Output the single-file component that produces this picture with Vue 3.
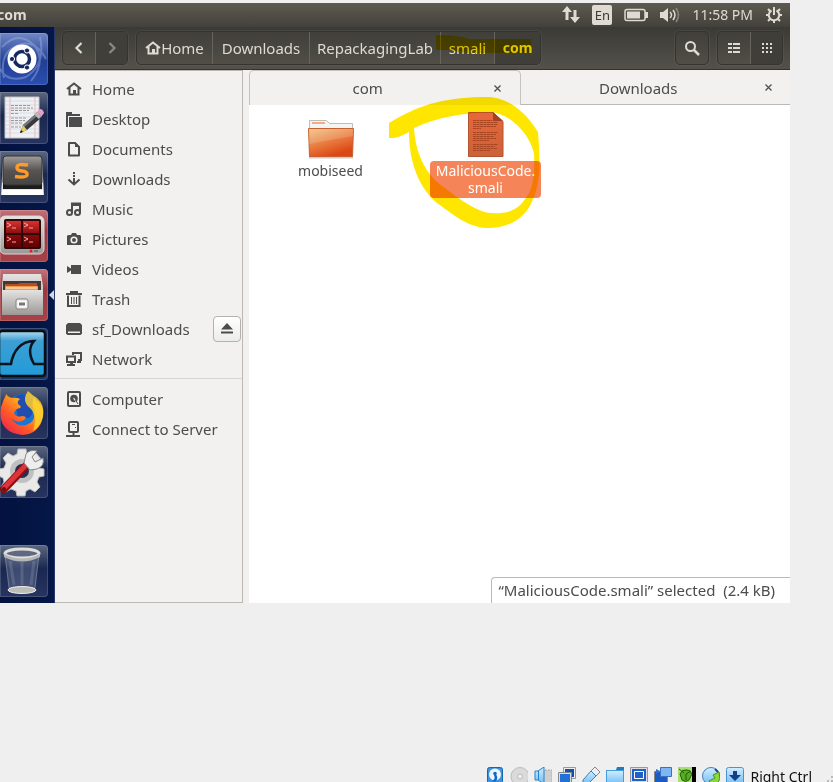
<script setup>
import { ref } from 'vue'

const places = [
  { id: 'home', label: 'Home' },
  { id: 'desktop', label: 'Desktop' },
  { id: 'documents', label: 'Documents' },
  { id: 'downloads', label: 'Downloads' },
  { id: 'music', label: 'Music' },
  { id: 'pictures', label: 'Pictures' },
  { id: 'videos', label: 'Videos' },
  { id: 'trash', label: 'Trash' },
  { id: 'drive', label: 'sf_Downloads', eject: true },
  { id: 'network', label: 'Network' }
]
const devices = [
  { id: 'computer', label: 'Computer' },
  { id: 'server', label: 'Connect to Server' }
]
const launchers = [
  { id: 'dash', label: 'Search your computer', tone: 'blue' },
  { id: 'gedit', label: 'Text Editor', tone: 'slate' },
  { id: 'sublime', label: 'Sublime Text', tone: 'slate' },
  { id: 'terminator', label: 'Terminator', tone: 'red' },
  { id: 'files', label: 'Files', tone: 'red', active: true },
  { id: 'wireshark', label: 'Wireshark', tone: 'navy' },
  { id: 'firefox', label: 'Firefox', tone: 'slate' },
  { id: 'settings', label: 'System Settings', tone: 'slate' },
  { id: 'bin', label: 'Trash', tone: 'slate', last: true }
]
const crumbs = [
  { label: 'Home', size: 'w-home', icon: true },
  { label: 'Downloads', size: 'w-down' },
  { label: 'RepackagingLab', size: 'w-lab' },
  { label: 'smali', size: 'w-smali' },
  { label: 'com', size: 'w-com', current: true }
]
const tabs = ['com', 'Downloads']
const activeTab = ref('com')
const vmIcons = ['disk', 'cd', 'audio', 'net', 'usb', 'shared', 'display', 'record', 'cpu', 'mouse', 'key']
</script>

<template>
  <svg class="defs" aria-hidden="true">
    <defs>
      <linearGradient id="gFolder" x1="0" y1="0" x2="0.5" y2="1">
        <stop offset="0" stop-color="#f0c27e" /><stop offset="0.5" stop-color="#ea8346" /><stop offset="1" stop-color="#dd4512" />
      </linearGradient>
      <linearGradient id="gDoc" x1="0" y1="0" x2="0" y2="1">
        <stop offset="0" stop-color="#e8673b" /><stop offset="1" stop-color="#cc6138" />
      </linearGradient>
      <linearGradient id="gSteel" x1="0" y1="0" x2="0" y2="1">
        <stop offset="0" stop-color="#e4e3e1" /><stop offset="1" stop-color="#9b9896" />
      </linearGradient>
      <linearGradient id="gDark" x1="0" y1="0" x2="0" y2="1">
        <stop offset="0" stop-color="#a19d9c" /><stop offset="0.5" stop-color="#575452" /><stop offset="1" stop-color="#444" />
      </linearGradient>
      <linearGradient id="gShark" x1="0" y1="0" x2="0" y2="1">
        <stop offset="0" stop-color="#b5dcef" /><stop offset="0.22" stop-color="#3d9fd4" /><stop offset="1" stop-color="#219bd8" />
      </linearGradient>
      <linearGradient id="gFox" x1="1" y1="0" x2="0.1" y2="1">
        <stop offset="0" stop-color="#ffef44" /><stop offset="0.35" stop-color="#ffb01f" /><stop offset="0.65" stop-color="#ff5a26" /><stop offset="1" stop-color="#e91e55" />
      </linearGradient>
      <linearGradient id="gTerm" x1="0" y1="0" x2="0" y2="1">
        <stop offset="0" stop-color="#d5342f" /><stop offset="0.5" stop-color="#8d0a0c" /><stop offset="1" stop-color="#5d0205" />
      </linearGradient>
      <linearGradient id="gVb" x1="0" y1="0" x2="0" y2="1">
        <stop offset="0" stop-color="#d3edff" /><stop offset="1" stop-color="#6fbdf2" />
      </linearGradient>

      <symbol id="home" viewBox="0 0 16 16">
        <path d="M1 8 8 2.5 15 8M3.5 6.5v7h9v-7" fill="none" stroke="currentColor" stroke-width="2" />
        <path d="M7 9h3v5H7z" fill="currentColor" />
      </symbol>
      <symbol id="desktop" viewBox="0 0 16 16">
        <path d="M0 1h6v2h8v2H2v11H0zM3 6h13v10H3z" fill="currentColor" />
      </symbol>
      <symbol id="documents" viewBox="0 0 16 16">
        <path d="M3 2h6l4 4v8.500H3z" fill="none" stroke="currentColor" stroke-width="2" stroke-linejoin="round" />
        <path d="M9 1v5h5z" fill="currentColor" />
      </symbol>
      <symbol id="downloads" viewBox="0 0 16 16">
        <path d="M7 1h2v2H7zM7 4h2v2H7zM7 7h2v5H7z" fill="currentColor" />
        <path d="m2.500 8.500 5.500 5 5.500-5" fill="none" stroke="currentColor" stroke-width="2" />
      </symbol>
      <symbol id="music" viewBox="0 0 16 16">
        <path d="M6 12V2.500h8V12M6 4h8" fill="none" stroke="currentColor" stroke-width="2" />
        <circle cx="3.500" cy="11.500" r="2.500" fill="none" stroke="currentColor" stroke-width="2" />
        <circle cx="11.500" cy="11.500" r="2.500" fill="none" stroke="currentColor" stroke-width="2" />
      </symbol>
      <symbol id="pictures" viewBox="0 0 16 16">
        <path d="M2 4h3l1-2h4l1 2h3l1 1v9H1V5z" fill="currentColor" />
        <circle cx="8" cy="9" r="2.800" fill="none" stroke="#f2f1f0" stroke-width="1.600" />
      </symbol>
      <symbol id="videos" viewBox="0 0 16 16">
        <path d="M5 4h10v9H5V9.500L1 12V5l4 2.500z" fill="currentColor" />
      </symbol>
      <symbol id="trash" viewBox="0 0 16 16">
        <path d="M5 2.500V1h6v1.500M0 3h16M2 4.500V15h11.500V4.500" fill="none" stroke="currentColor" stroke-width="2" />
        <path d="M5.500 6v7M8 6v7M10.500 6v7" stroke="currentColor" />
      </symbol>
      <symbol id="drive" viewBox="0 0 16 16">
        <path d="M2 2h12l2 2v8.500L14.500 14h-13L0 12.500V4z" fill="currentColor" />
        <path d="M2 10.500h12V12H2z" fill="#f2f1f0" />
      </symbol>
      <symbol id="network" viewBox="0 0 16 16">
        <path d="M7 4V2h8v7h-3M1 5.500h8V11H1z" fill="none" stroke="currentColor" stroke-width="2" />
        <path d="M4 11h3v2h2v2H1v-2h3zM11 10h4v2h-4z" fill="currentColor" />
      </symbol>
      <symbol id="computer" viewBox="0 0 16 16">
        <rect x="2" y="1" width="12" height="14" rx="1" fill="none" stroke="currentColor" stroke-width="2" />
        <circle cx="8" cy="7.500" r="3.800" fill="currentColor" />
        <path d="m7.500 7 4 5.500" stroke="#f2f1f0" stroke-width="1.200" /><path d="m9.500 9 2.500 4" stroke="currentColor" />
      </symbol>
      <symbol id="server" viewBox="0 0 16 16">
        <rect x="3" y="1" width="9" height="10" rx="1" fill="none" stroke="currentColor" stroke-width="2" />
        <path d="M6 3.500h3M9 6.500h1" stroke="currentColor" /><path d="M7.500 11v3M0 15h14" stroke="currentColor" stroke-width="2" />
      </symbol>

      <symbol id="dash" viewBox="0 0 48 52">
        <path d="M2 14Q18-3 34 12 47 28 31 48M40 4Q46 31 26 44 8 50 0 36M4 45Q-2 17 22 11 36 8 46 26" fill="none" stroke="#a9b9e8" stroke-opacity=".4" stroke-width="2" />
        <circle cx="22" cy="26" r="14.500" fill="#fff" />
        <circle cx="22" cy="26" r="7.500" fill="none" stroke="#16295f" stroke-width="3.500" />
        <g fill="#16295f" stroke="#fff"><circle cx="12" cy="26" r="2.600" /><circle cx="27" cy="17.500" r="2.600" /><circle cx="27" cy="34.500" r="2.600" /></g>
      </symbol>
      <symbol id="gedit" viewBox="0 0 48 52">
        <path d="M5 5h34v41H5z" fill="#eef0f2" stroke="#c7c4bd" />
        <path d="M5 9h34M5 13h34M5 17h34M5 21h34M5 25h34M5 29h34M5 33h34M5 37h34M5 41h34" stroke="#cfd9e6" stroke-width=".7" />
        <path d="M10 5v41M35 5v41" stroke="#e9b8bf" />
        <path d="M11 13.500h20M11 16h22M11 18.500h18M11 21.500h7M11 26h16M11 28.500h14M11 31h12M11 35h10" stroke="#999" stroke-dasharray="3 1" />
        <path d="m20 41 3-8 15-13 4 5-15 13z" fill="#39393b" /><path d="m23 33 15-13 1.500 2-15 13z" fill="#77787b" />
        <path d="m20 41 3-8 4 5z" fill="#e0cd63" /><path d="m20 41 1-3 2 2z" fill="#111" />
        <path d="m34 22 3-2.500 4.500 5-3 2.500z" fill="#bbb" /><path d="m37 19.500 3-2.500q3 0 4 4l-2.500 3.500z" fill="#e8a0c6" />
      </symbol>
      <symbol id="sublime" viewBox="0 0 48 52">
        <path d="M3 8h39l2 36H1z" fill="#e6e5e5" /><path d="M2 39h41v5H2z" fill="#fff" />
        <path d="M3 28h39v10H3z" fill="#1d1c1c" /><rect x="3" y="5" width="39" height="29" rx="3" fill="url(#gDark)" stroke="#343231" />
        <path d="M28 14Q17 12 17 16.500q0 3 5 3.500 6 .500 5 4-1 3-12 1.500" fill="none" stroke="#ff9928" stroke-width="3.500" />
      </symbol>
      <symbol id="terminator" viewBox="0 0 48 52">
        <rect x="0" y="6" width="44" height="38" rx="5" fill="url(#gSteel)" stroke="#d9d7d5" /><rect x="4" y="9" width="37" height="30" rx="2" fill="#2a090a" />
        <path d="M6 11h15v12H6zM23 11h16v12H23zM6 25h15v12H6zM23 25h16v12H23z" fill="url(#gTerm)" />
        <path d="m7 13 4 2-4 2m5 1h4m8-5 4 2-4 2m5 1h4M7 27l4 2-4 2m5 1h4m8-5 4 2-4 2m5 1h4" fill="none" stroke="#f3aaa8" />
        <circle cx="31" cy="41" r="1.500" fill="#f01a1a" /><path d="M34 41h4" stroke="#777" stroke-width="2" />
      </symbol>
      <symbol id="files" viewBox="0 0 48 52">
        <path d="M3 5h38l2 12v27H2V17z" fill="url(#gSteel)" /><path d="M3 12h38v14H3z" fill="#403a38" />
        <path d="M5 15h13l2-1h17v12H5z" fill="#bb4c20" /><path d="M5 17h33v9H5z" fill="#ee9b51" /><path d="M6 19h31" stroke="#fff3d8" />
        <path d="M2 21h41v25H2z" fill="url(#gSteel)" /><rect x="16" y="30" width="12" height="10" rx="2" fill="#efefef" stroke="#838383" />
        <rect x="18.500" y="33" width="7" height="4" fill="#777" stroke="#fff" />
      </symbol>
      <symbol id="wireshark" viewBox="0 0 48 52">
        <rect x="-1" y="3" width="46" height="45" rx="3" fill="url(#gShark)" stroke="#080d12" stroke-width="2.500" />
        <path d="M0 36h11C13 23 21 13 34 13 28 20 30 29 34 36h11" fill="none" stroke="#07141d" stroke-width="2.500" />
      </symbol>
      <symbol id="firefox" viewBox="0 0 48 52">
        <circle cx="23" cy="25" r="18" fill="#1677d5" /><path d="M14 10Q23 4 31 11 38 21 29 31H18z" fill="#1f4eb3" />
        <path d="M4 12q2-3 2-5 3 4 7 4 3-1 7 1-4 3-1 6 3 1 1 3-5 1-6 5 2 5 8 3 5 0 3 3-6 6-14-1 5 9 15 7 11-3 8-16-3-4 0-12 1 3 4 5Q44 20 43 29 40 47 22 48-3 45 1 20z" fill="url(#gFox)" />
        <path d="M28 4q4 4 9 7 8 7 6 18-2 10-10 15 5-15-3-23Q21 14 28 4z" fill="#ffcf2e" fill-opacity=".85" />
      </symbol>
      <symbol id="settings" viewBox="0 0 48 52">
        <path d="m18 3 8 0 1 6 4 2 5-4 5 6-3 5 1 4 5 1v7l-5 1-2 5 3 5-5 5-5-3-4 2-1 5h-8l-1-5-5-2-5 3-5-5 3-5-1-4-4-2v-7l5-1 2-5-3-5 5-5 5 3 4-2z" fill="#e9e9e7" stroke="#b8b8b8" />
        <circle cx="22" cy="25" r="12" fill="#bfc0c2" /><circle cx="22" cy="25" r="7" fill="#243154" />
        <path d="M4 43 26 20" stroke="#8e0d12" stroke-width="8" stroke-linecap="round" /><path d="M4 42 26 19" stroke="#dd343a" stroke-width="5" stroke-linecap="round" />
        <path d="m24 17 2-9q4-5 11-3l-5 6 3 5 8-4q2 8-6 11l-7 1z" fill="#eee" stroke="#888" /><circle cx="4" cy="43" r="2" fill="#631116" />
      </symbol>
      <symbol id="bin" viewBox="0 0 48 52">
        <path d="M5 10 9 43q13 8 26 0L39 10" fill="#c7d2ea" fill-opacity=".2" stroke="#d3dae8" stroke-opacity=".35" />
        <path d="m10 16 4 24M34 16l-3 24M22 17v23" stroke="#fff" stroke-opacity=".13" stroke-width="3" />
        <ellipse cx="22" cy="45" rx="14" ry="3.500" fill="#bcbcb8" stroke="#eee" /><ellipse cx="22" cy="8.500" rx="17" ry="4.500" fill="#606984" stroke="#dededb" stroke-width="3" />
        <path d="M4 9q18 9 36 0v3q-18 9-36 0z" fill="#b4b5b5" />
      </symbol>

      <symbol id="vb-disk" viewBox="0 0 18 18"><rect x="1.500" y=".5" width="15" height="16" rx="2" fill="#3f92dd" stroke="#1765b4" /><circle cx="9" cy="7.500" r="6" fill="#e9f6ff" /><circle cx="9" cy="6.500" r="1.800" fill="#1568c2" /><path d="M9 6.500q4 3 1 8H6q4-3 2-6" fill="#1568c2" /></symbol>
      <symbol id="vb-cd" viewBox="0 0 18 18"><circle cx="10" cy="9.500" r="9" fill="#dadada" stroke="#bbb" /><circle cx="10" cy="9.500" r="2.500" fill="#eee" stroke="#bbb" /></symbol>
      <symbol id="vb-audio" viewBox="0 0 18 18"><path d="M8 3h10v14H8z" fill="#cfcfcf" stroke="#aaa" stroke-dasharray="2 1" /><path d="M1 4h3l6-4v17l-6-4H1z" fill="url(#gVb)" stroke="#2582ca" /><path d="M4.500 4v9" stroke="#2582ca" /></symbol>
      <symbol id="vb-net" viewBox="0 0 18 18"><path d="M5.500.5h12v11h-12z" fill="#eee" stroke="#999" /><path d="M7 2h9v8H7z" fill="#154caf" /><path d="M.5 5.500h13v10H.5z" fill="#ddd" stroke="#888" /><path d="M2 7h10v8H2z" fill="#2370d8" /></symbol>
      <symbol id="vb-usb" viewBox="0 0 18 18"><path d="m9 4 4-4 5 5-4 4z" fill="#eee" stroke="#888" /><path d="m1 13 8-9 5 5-8 8H1z" fill="url(#gVb)" stroke="#3682ba" /></symbol>
      <symbol id="vb-shared" viewBox="0 0 18 18"><path d="M0 3h10l1-3h7v16H0z" fill="#2478bb" /><path d="M.5 3.500h17v14H.5z" fill="url(#gVb)" stroke="#429ddd" /></symbol>
      <symbol id="vb-display" viewBox="0 0 18 18"><path d="M.5.5h17v15H.5z" fill="#ddd" stroke="#999" /><path d="M2 2h14v12H2z" fill="#1d62c9" /><path d="M4.500 4.500h9v7h-9z" fill="none" stroke="#fff" /></symbol>
      <symbol id="vb-record" viewBox="0 0 18 18"><path d="M.5 4.500h13v12H.5z" fill="#1a5bc5" stroke="#888" /><path d="M6.500.5h11v9h-11z" fill="#7db6f4" stroke="#426fb5" /><path d="m2 2 4 2-4 3z" fill="#3373c7" /></symbol>
      <symbol id="vb-cpu" viewBox="0 0 18 18"><path d="M0 0h16v18H0z" fill="#a8df72" /><path d="M14 0h4v18h-4z" fill="#000" /><path d="M2 7q2-5 6-4 4-1 6 4l-3 6q-3 3-7 0z" fill="#56ad20" stroke="#245d0d" /><path d="m1 2 5 4m2 1v6M8 7l5-3" stroke="#245d0d" /></symbol>
      <symbol id="vb-mouse" viewBox="0 0 18 18"><circle cx="9" cy="9" r="8.500" fill="url(#gVb)" stroke="#4281b4" /><path d="m17 5-6 3 2 3-6 3 3 4h4l4-6z" fill="#8cd936" stroke="#469021" /><path d="m13 2 3 3" stroke="#174d8f" stroke-width="2" /></symbol>
      <symbol id="vb-key" viewBox="0 0 18 18"><rect x=".5" y=".5" width="17" height="17" rx="2" fill="url(#gVb)" stroke="#4595cf" /><path d="M7 4h4v4h4l-6 6-6-6h4z" fill="#143f83" /></symbol>
    </defs>
  </svg>

  <div class="vm">
    <main class="screen">
      <header class="menubar">
        <strong class="app-title">com</strong>
        <div class="indicators">
          <svg class="arrows" width="18" height="18" viewBox="0 0 18 18"><path d="M5 14V5M13 4v9" fill="none" stroke="currentColor" stroke-width="3" /><path d="m0 6 5-6 5 6zM8 11l5 6 5-6z" fill="currentColor" /></svg>
          <span class="lang">En</span>
          <svg class="battery" width="24" height="14" viewBox="0 0 24 14"><rect x="1" y="1.500" width="20" height="11" rx="2" fill="none" stroke="currentColor" stroke-width="1.500" /><path d="M3 3.500h13v7H3zM21 4h3v6h-3z" fill="currentColor" /></svg>
          <svg class="speaker" width="20" height="18" viewBox="0 0 20 18"><path d="M0 6h3l5-4v14l-5-4H0z" fill="currentColor" /><path d="M10 6q3 3 0 6M13 4q4 5 0 10" fill="none" stroke="currentColor" stroke-width="1.500" /><path d="M16 2q5 7 0 14" fill="none" stroke="#8a8780" stroke-width="1.500" /></svg>
          <time class="clock">11:58 PM</time>
          <svg width="18" height="18" viewBox="0 0 18 18"><path d="M6.500 4.500a5.200 5.200 0 1 0 5 0" fill="none" stroke="currentColor" stroke-width="2" /><path d="M9 1v8M1 9h3M14 9h3M3 3l2.500 2.500M15 3l-2.500 2.500M3 15l2.500-2.500M15 15l-2.500-2.500M9 14v3" stroke="currentColor" stroke-width="2" /></svg>
        </div>
      </header>

      <div class="workspace">
        <nav class="launcher" aria-label="Launcher">
          <button v-for="item in launchers" :key="item.id" type="button" :aria-label="item.label" class="tile" :class="[item.tone, { last: item.last, active: item.active }]">
            <svg width="48" height="52"><use :href="'#' + item.id" /></svg>
          </button>
        </nav>

        <section class="window">
          <div class="toolbar">
            <div class="group">
              <button type="button" class="tool" aria-label="Back"><svg width="16" height="16"><path d="m10.500 3-5 5 5 5" fill="none" stroke="currentColor" stroke-width="2.200" /></svg></button>
              <button type="button" class="tool dim" aria-label="Forward"><svg width="16" height="16"><path d="m5.500 3 5 5-5 5" fill="none" stroke="currentColor" stroke-width="2.200" /></svg></button>
            </div>
            <div class="group path">
              <button v-for="c in crumbs" :key="c.label" type="button" class="tool crumb" :class="[c.size, { current: c.current }]">
                <svg v-if="c.icon" width="16" height="16"><use href="#home" /></svg>{{ c.label }}
              </button>
            </div>
            <div class="spacer"></div>
            <div class="group">
              <button type="button" class="tool" aria-label="Search"><svg width="16" height="16"><circle cx="6.500" cy="6.500" r="4.500" fill="none" stroke="currentColor" stroke-width="2" /><path d="m10 10 5 5" stroke="currentColor" stroke-width="2.500" /></svg></button>
            </div>
            <div class="group views">
              <button type="button" class="tool" aria-label="List view"><svg width="12" height="12"><path d="M0 2h4M0 6h4M0 10h4M5 2h7M5 6h7M5 10h7" stroke="currentColor" stroke-width="2" /></svg></button>
              <button type="button" class="tool current" aria-label="Icon view"><svg width="12" height="12"><path d="M1 2h10M1 6h10M1 10h10" stroke="currentColor" stroke-width="2" stroke-dasharray="2 2" /></svg></button>
            </div>
          </div>

          <div class="body">
            <aside class="sidebar">
              <ul class="places">
                <li v-for="p in places" :key="p.id" class="place">
                  <a href="#"><svg width="16" height="16"><use :href="'#' + p.id" /></svg>{{ p.label }}</a>
                  <button v-if="p.eject" type="button" class="eject" aria-label="Eject"><svg width="12" height="12"><path d="m6 0 6 6.500H0zM0 8.500h12v2H0z" fill="currentColor" /></svg></button>
                </li>
              </ul>
              <hr class="rule" />
              <ul class="places">
                <li v-for="p in devices" :key="p.id" class="place">
                  <a href="#"><svg width="16" height="16"><use :href="'#' + p.id" /></svg>{{ p.label }}</a>
                </li>
              </ul>
            </aside>

            <div class="content">
              <div class="tabs">
                <div v-for="t in tabs" :key="t" class="tab" :class="{ open: t === activeTab }">
                  <button type="button" class="tab-label" @click="activeTab = t">{{ t }}</button>
                  <button type="button" class="tab-close" aria-label="Close tab"><svg width="7" height="7"><path d="m.5.5 6 6m0-6-6 6" stroke="currentColor" stroke-width="1.200" /></svg></button>
                </div>
              </div>
              <div class="files">
                <figure class="file">
                  <svg width="48" height="48" viewBox="0 0 48 48">
                    <path d="M2 46h44" stroke="#ccc" stroke-width="3" />
                    <path d="M2.500 20V9.500h17l3 3h23V20z" fill="#f4f4f3" stroke="#bdbdbb" /><path d="M5 12h13" stroke="#f1ad82" stroke-width="2" />
                    <path d="M1.500 17.500h45l-1 28h-43z" fill="url(#gFolder)" stroke="#c6612f" />
                    <path d="M2 18h44v7Q22 29 2 33z" fill="#fff" fill-opacity=".14" />
                  </svg>
                  <figcaption>mobiseed</figcaption>
                </figure>
                <figure class="file selected">
                  <svg width="48" height="48" viewBox="0 0 48 48">
                    <path d="M6.500 1.500H31l10 9v35h-34.500z" fill="url(#gDoc)" stroke="#af5532" /><path d="M31 1v9h10z" fill="#a5421f" />
                    <path d="M11 9.500h19M11 11.500h25M11 13.500h25M11 15.500h23M11 17.500h8M11 21.500h25M11 23.500h23M11 25.500h21M11 27.500h23M11 29.500h16M11 33.500h25M11 35.500h22M11 37.500h24M11 39.500h17" stroke="#a84622" stroke-dasharray="3 .5" />
                  </svg>
                  <figcaption>MaliciousCode.<wbr />smali</figcaption>
                </figure>
              </div>
              <div class="status">“MaliciousCode.smali” selected&nbsp; (2.4 kB)</div>
            </div>
          </div>
        </section>
      </div>

      <svg class="marker" width="560" height="240" viewBox="0 0 560 240" aria-hidden="true">
        <path d="M436 32Q458 32 470 36H531V50H477Q457 50 450 47H436z" />
        <path fill-rule="evenodd" d="M389 120C421 100 450 94 487 94C513 94 531 117 538 129C540 153 541 181 533 196C526 215 510 225 487 225C467 224 454 212 437 200C417 183 409 156 409 129Q400 134 394 135H389zM414 125C437 114 465 110 490 109C511 110 531 133 534 151C535 170 533 186 527 193C519 207 509 211 490 210C474 208 454 192 437 179C422 165 415 145 414 125z" />
      </svg>
    </main>

    <footer class="vm-bar">
      <svg v-for="i in vmIcons" :key="i" width="18" height="18"><use :href="'#vb-' + i" /></svg>
      <span class="host-key">Right Ctrl</span>
      <svg class="grip" width="6" height="18"><path d="M4 9h2v2H4zM0 13h2v2H0zM4 13h2v2H4z" fill="#bbb" /></svg>
    </footer>
  </div>
</template>

<style>
body {
  margin: 0;
  background: #efefef;
}
</style>

<style scoped>
.defs {
  position: absolute;
  width: 0;
  height: 0;
}
.vm {
  display: flex;
  flex-direction: column;
  box-sizing: border-box;
  height: 100vh;
  min-height: 640px;
  padding-top: 3px;
  overflow: hidden;
  font: 15px/18px "Noto Sans", "Open Sans", sans-serif;
  color: #4c4c4c;
}
button {
  margin: 0;
  padding: 0;
  border: 0;
  background: none;
  font: inherit;
  color: inherit;
}
svg {
  display: block;
  flex: none;
}
.screen {
  position: relative;
  display: flex;
  flex: 1;
  flex-direction: column;
  margin-right: 43px;
  background: #3c3b37;
}
.menubar {
  display: flex;
  align-items: center;
  justify-content: space-between;
  height: 24px;
  padding-right: 7px;
  overflow: hidden;
  background: linear-gradient(#5d5a50, #42413b);
  color: #dfdbd2;
  font-size: 14px;
}
.app-title {
  margin-left: -3px;
}
.indicators {
  display: flex;
  align-items: center;
  gap: 12px;
}
.lang {
  width: 20px;
  border-radius: 2px;
  background: #dfdbd2;
  color: #3c3b37;
  font-size: 13px;
  line-height: 20px;
  text-align: center;
}
.workspace {
  display: flex;
  flex: 1;
}
.launcher {
  display: flex;
  flex: none;
  flex-direction: column;
  gap: 7px;
  box-sizing: border-box;
  width: 55px;
  padding: 6px 0;
  border-right: 1px solid #28366c;
  background: linear-gradient(90deg, #03123f, #051748);
}
.tile {
  position: relative;
  width: 48px;
  height: 52px;
  border-radius: 0 4px 4px 0;
  box-shadow: inset 0 0 0 1px rgba(255, 255, 255, 0.15);
}
.blue {
  background: linear-gradient(#7187c4, #203f95 55%, #2b4fb1);
}
.slate {
  background: linear-gradient(#5d687f, #1a2851 45%, #26345f);
}
.navy {
  background: #1c3768;
}
.red {
  background: linear-gradient(#c2747a, #9d3840 40%, #a84249);
}
.active::after {
  position: absolute;
  top: 21px;
  right: -6px;
  border: 5px solid transparent;
  border-right-color: #d6d8df;
  border-left: 0;
  content: "";
}
.last {
  margin-top: auto;
}
.window {
  display: flex;
  flex: 1;
  flex-direction: column;
  min-width: 0;
}
.toolbar {
  display: flex;
  gap: 8px;
  align-items: center;
  box-sizing: border-box;
  height: 43px;
  padding: 0 7px;
  border-bottom: 1px solid #33322e;
  background: linear-gradient(#3b3a36, #53514a);
  color: #dfdbd2;
}
.group {
  display: flex;
  box-sizing: border-box;
  height: 34px;
  border: 1px solid #34332f;
  border-radius: 5px;
  background: linear-gradient(#403f3a, #504e47);
  box-shadow: 0 0 0 1px rgba(255, 255, 255, 0.05);
}
.tool {
  display: flex;
  align-items: center;
  justify-content: center;
  box-sizing: border-box;
  width: 32px;
  white-space: nowrap;
}
.tool + .tool {
  border-left: 1px solid #66645c;
}
.dim {
  background: #403f3a;
  color: #8b8981;
}
.current {
  background: #3f3e39;
  font-weight: 700;
}
.crumb.current {
  font-size: 14px;
}
.w-home {
  width: 75px;
}
.w-down {
  width: 97px;
}
.w-lab {
  width: 131px;
}
.w-smali {
  width: 54px;
}
.w-com {
  width: 46px;
}
.spacer {
  flex: 1;
}
.body {
  display: flex;
  flex: 1;
  background: #f2f1f0;
}
.sidebar {
  flex: none;
  box-sizing: border-box;
  width: 188px;
  padding-top: 3px;
  border: solid #bbb9b6;
  border-width: 1px 1px 1px 0;
}
.places {
  margin: 0;
  padding: 0;
  list-style: none;
}
.place {
  display: flex;
  align-items: center;
  justify-content: space-between;
  height: 30px;
  padding: 0 1px 0 11px;
}
.place a {
  display: flex;
  align-items: center;
  gap: 10px;
  color: inherit;
  text-decoration: none;
}
.eject {
  display: flex;
  align-items: center;
  justify-content: center;
  width: 28px;
  height: 26px;
  border: 1px solid #b4b2af;
  border-radius: 4px;
  background: linear-gradient(#fff, #ececeb);
}
.rule {
  height: 1px;
  margin: 4px 0 5px;
  border: 0;
  background: #d8d6d3;
}
.content {
  position: relative;
  display: flex;
  flex: 1;
  flex-direction: column;
  min-width: 0;
  margin-left: 6px;
  background: #fff;
}
.tabs {
  display: flex;
  background: #f2f1f0;
}
.tab {
  display: flex;
  flex: 1 1 0;
  box-sizing: border-box;
  height: 35px;
  padding-right: 10px;
  align-items: center;
  border: solid transparent;
  border-width: 1px 0;
  border-bottom-color: #bbb9b6;
}
.tab.open {
  border: solid #c4c2bf;
  border-width: 1px 1px 0;
  border-radius: 5px 5px 0 0;
}
.tab-label {
  flex: 1;
  height: 34px;
}
.tab-close {
  display: flex;
  align-items: center;
  justify-content: center;
  width: 24px;
  height: 24px;
}
.files {
  display: flex;
  flex-wrap: wrap;
  padding: 6px 4px;
}
.file {
  display: flex;
  flex-direction: column;
  align-items: center;
  width: 155px;
  margin: 0;
}
.file figcaption {
  width: min-content;
  margin-top: 2px;
  padding: 1px 6px 2px;
  border-radius: 4px;
  font-size: 14px;
  line-height: 17px;
  text-align: center;
}
.selected figcaption {
  background: #f58558;
  color: #fff;
}
.status {
  position: absolute;
  right: 0;
  bottom: 0;
  padding: 3px 15px 4px 6px;
  border: solid #bbb9b6;
  border-width: 1px 0 0 1px;
  border-radius: 4px 0 0;
  background: #fff;
}
.marker {
  position: absolute;
  top: 0;
  left: 0;
  fill: #ffe600;
  mix-blend-mode: multiply;
  pointer-events: none;
}
.vm-bar {
  display: flex;
  flex: none;
  gap: 6px;
  justify-content: flex-end;
  height: 15px;
  margin-top: 164px;
  overflow: hidden;
  color: #111;
  font-size: 14px;
  line-height: 20px;
}
.grip {
  margin-left: 9px;
}
</style>
